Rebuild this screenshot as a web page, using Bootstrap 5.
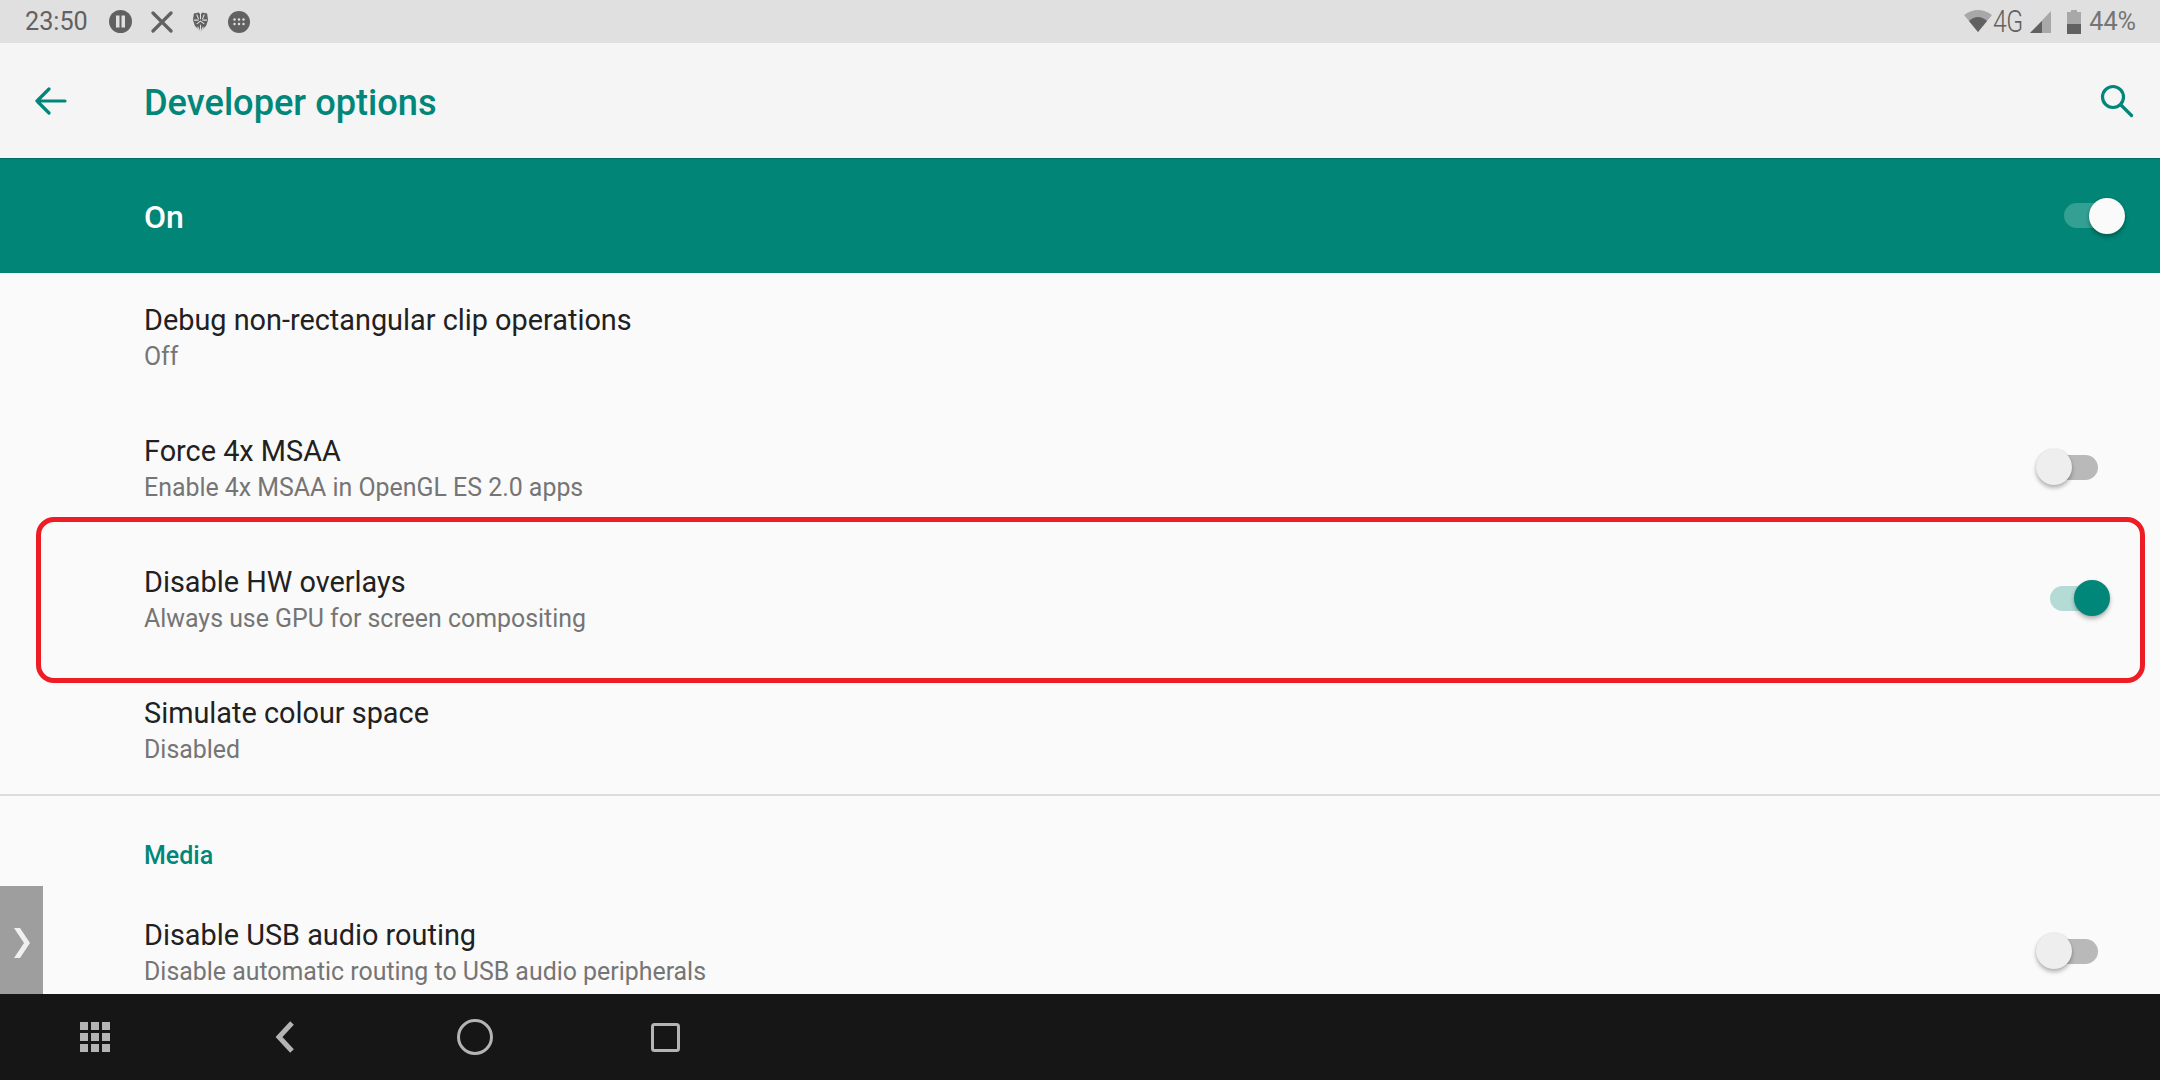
<!doctype html>
<html lang="en">
<head>
<meta charset="utf-8">
<link href="https://cdn.jsdelivr.net/npm/bootstrap@5.3.0/dist/css/bootstrap.min.css" rel="stylesheet">
<style>
html,body{height:100%;overflow:hidden}
body{background:#fafafa;font-family:Roboto,"Liberation Sans",sans-serif}
.screen{height:1080px;width:2160px;position:relative}
.sbar{height:43px;background:#e0e0e0;color:#616161;font-size:25.2px;padding:0 24px 0 25px}
.sbar-time{width:84px;line-height:1}
.sbar-gap{gap:19px}
.sbar-right{font-size:25.2px;line-height:1;color:#757575}
.sig-4g{display:inline-block;font-size:31px;font-weight:300;color:#616161;width:30px;margin-left:1px;transform:scaleX(.8);transform-origin:left center;letter-spacing:-.5px}
.sig-bar{margin-left:7px}
.bat{margin-left:16px}
.bat-pct{margin-left:8px}
.tbar{height:115px;background:#f5f5f5;color:#00897b;padding-right:26px}
.tbar-back{width:144px;padding-left:35px}
.tbar-title{font-size:36.2px;font-weight:500;color:#00877a;flex-grow:1;margin-top:5px}
.master{height:115px;background:#008577;color:#fff;font-size:32px;font-weight:500;padding-left:144px;padding-right:35px;box-shadow:inset 0 2px 1px -1px rgba(0,0,0,.18)}
.master-lbl{margin-top:2px}
.scroller{min-height:0;overflow:hidden;background:#fafafa}
.pref{height:131px;padding-left:144px;padding-right:62px}
.pref-t{font-size:28.85px;line-height:36px;color:#212121;margin-top:-1px}
.pref-s{font-size:24.9px;line-height:36px;color:#757575;padding-top:1px}
.rule{height:2px;background:#dcdcdc;margin-top:-3px}
.cat{height:92px;padding-left:144px;padding-top:47px;font-size:25px;line-height:26px;font-weight:500;color:#00877a}
.navb{height:86px;background:#161616;flex-shrink:0}
.swt{position:relative;width:62px;height:36px;flex-shrink:0;margin-top:-5px}
.swt::before{content:"";position:absolute;top:5.5px;height:25px;width:50px;border-radius:13px;background:#b9b9b9;right:0}
.swt::after{content:"";position:absolute;top:0;left:0;width:36px;height:36px;border-radius:50%;background:#eee;box-shadow:0 3px 4px rgba(0,0,0,.28),0 0 2px rgba(0,0,0,.12)}
.swt.on{margin-right:-12px}
.swt.on::before{background:#b5dbd7;right:10px}
.swt.on::after{left:auto;right:0;background:#00877a}
.swt.hd{margin:0;width:62px}
.swt.hd::before{background:#33a093;right:10px;width:51px}
.swt.hd::after{left:auto;right:0;background:#fafafa}
.redbox{position:absolute;left:36px;top:517px;width:2109px;height:166px;border:5px solid #ee1c25;border-radius:18px;pointer-events:none}
.handle{position:absolute;left:0;top:886px;width:43px;height:108px;background:#9e9e9e;color:#f0f0f0;padding-top:6px}
.nav-slot{width:190px}
</style>
</head>
<body>
<div class="screen d-flex flex-column">
  <div class="sbar d-flex align-items-center flex-shrink-0">
    <span class="sbar-time">23:50</span>
    <div class="d-flex align-items-center sbar-gap">
      <svg width="23" height="23" viewBox="0 0 23 23"><circle cx="11.500" cy="11.500" r="11.500" fill="#616161"/><rect x="7" y="5.500" width="3.500" height="12" fill="#e0e0e0"/><rect x="12.500" y="5.500" width="3.500" height="12" fill="#e0e0e0"/></svg>
      <svg width="22" height="22" viewBox="0 0 22 22"><path d="M2 2 20 20M20 2 2 20" stroke="#616161" stroke-width="3.200" fill="none" stroke-linecap="round"/></svg>
      <svg width="17" height="22" viewBox="0 0 18 22"><path d="M2 2 7 1 9 3 11 1 16 2 17 9 15 15 9 21 3 15 1 9Z" fill="#616161"/><path d="M9 2V8M5 3 7 8M13 3 11 8M2 9H7M16 9H11M5 13 9 10 13 13M9 14V21M6 16 8 20M12 16 10 20" stroke="#e0e0e0" stroke-width="1.100" fill="none"/></svg>
      <svg width="22" height="22" viewBox="0 0 22 22"><circle cx="11" cy="11" r="11" fill="#616161"/><g fill="#e0e0e0"><circle cx="6.500" cy="8.500" r="1.200"/><circle cx="11" cy="8.500" r="1.200"/><circle cx="15.500" cy="8.500" r="1.200"/><circle cx="6.500" cy="13" r="1.200"/><circle cx="11" cy="13" r="1.200"/><circle cx="15.500" cy="13" r="1.200"/></g></svg>
    </div>
    <div class="d-flex align-items-center ms-auto sbar-right">
      <svg width="28" height="24" viewBox="0 0 28 24"><path d="M0 5Q14-5 28 5L14 22Z" fill="#a8a8a8"/><path d="M5 11Q14 3 23 11L14 22Z" fill="#616161"/></svg>
      <span class="sig-4g">4G</span>
      <svg class="sig-bar" width="21" height="22" viewBox="0 0 21 22"><path d="M21 0V22H0Z" fill="#a8a8a8"/><path d="M12 10V22H0Z" fill="#616161"/></svg>
      <svg class="bat" width="14" height="24" viewBox="0 0 14 24"><path d="M4 0H10V2H14V24H0V2H4Z" fill="#a8a8a8"/><path d="M0 14H14V24H0Z" fill="#616161"/></svg>
      <span class="bat-pct">44%</span>
    </div>
  </div>
  <div class="tbar d-flex align-items-center flex-shrink-0">
    <div class="tbar-back"><svg class="d-block" width="32" height="28" viewBox="0 0 32 28"><path d="M30 14H2M14 2 2 14 14 26" stroke="#00877a" stroke-width="3.200" fill="none" stroke-linecap="round" stroke-linejoin="round"/></svg></div>
    <div class="tbar-title">Developer options</div>
    <svg width="34" height="34" viewBox="0 0 34 34"><circle cx="13" cy="13" r="10.500" stroke="#00877a" stroke-width="3.200" fill="none"/><path d="M21 21 31.500 31.500" stroke="#00877a" stroke-width="3.200" stroke-linecap="round"/></svg>
  </div>
  <div class="master d-flex align-items-center justify-content-between flex-shrink-0">
    <span class="master-lbl">On</span>
    <div class="swt hd"></div>
  </div>
  <div class="scroller flex-grow-1">
    <div class="pref d-flex align-items-center justify-content-between"><div><div class="pref-t">Debug non-rectangular clip operations</div><div class="pref-s">Off</div></div></div>
    <div class="pref d-flex align-items-center justify-content-between"><div><div class="pref-t">Force 4x MSAA</div><div class="pref-s">Enable 4x MSAA in OpenGL ES 2.0 apps</div></div><div class="swt"></div></div>
    <div class="pref d-flex align-items-center justify-content-between"><div><div class="pref-t">Disable HW overlays</div><div class="pref-s">Always use GPU for screen compositing</div></div><div class="swt on"></div></div>
    <div class="pref d-flex align-items-center justify-content-between"><div><div class="pref-t">Simulate colour space</div><div class="pref-s">Disabled</div></div></div>
    <div class="rule"></div>
    <div class="cat">Media</div>
    <div class="pref d-flex align-items-center justify-content-between"><div><div class="pref-t">Disable USB audio routing</div><div class="pref-s">Disable automatic routing to USB audio peripherals</div></div><div class="swt"></div></div>
  </div>
  <div class="navb d-flex align-items-center">
    <div class="nav-slot d-flex justify-content-center"><svg width="30" height="30" viewBox="0 0 30 30" fill="#b4b4b4"><rect x="0" y="0" width="8" height="8"/><rect x="11" y="0" width="8" height="8"/><rect x="22" y="0" width="8" height="8"/><rect x="0" y="11" width="8" height="8"/><rect x="11" y="11" width="8" height="8"/><rect x="22" y="11" width="8" height="8"/><rect x="0" y="22" width="8" height="8"/><rect x="11" y="22" width="8" height="8"/><rect x="22" y="22" width="8" height="8"/></svg></div>
    <div class="nav-slot d-flex justify-content-center"><svg width="20" height="32" viewBox="0 0 20 32"><path d="M17 2 4 16 17 30" stroke="#b4b4b4" stroke-width="5" fill="none"/></svg></div>
    <div class="nav-slot d-flex justify-content-center"><svg width="36" height="36" viewBox="0 0 36 36"><circle cx="18" cy="18" r="16.500" stroke="#b4b4b4" stroke-width="3" fill="none"/></svg></div>
    <div class="nav-slot d-flex justify-content-center"><svg width="29" height="29" viewBox="0 0 29 29"><rect x="1.500" y="1.500" width="26" height="26" rx="2" stroke="#b4b4b4" stroke-width="3" fill="none"/></svg></div>
  </div>
  <div class="redbox"></div>
  <div class="handle d-flex align-items-center justify-content-center"><svg width="18" height="32" viewBox="0 0 18 32"><path d="M1 1H7L17 16 7 31H1L11 16Z" fill="#f0f0f0"/></svg></div>
</div>
<script src="https://cdn.jsdelivr.net/npm/bootstrap@5.3.0/dist/js/bootstrap.bundle.min.js"></script>
</body>
</html>
